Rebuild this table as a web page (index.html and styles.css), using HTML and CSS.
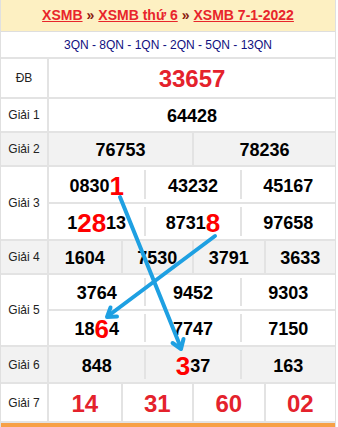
FILE: index.html
```html
<!DOCTYPE html>
<html lang="vi">
<head>
<meta charset="utf-8">
<title>XSMB 7-1-2022</title>
<link rel="stylesheet" href="styles.css">
</head>
<body>
<div class="board">
  <div class="title">
    <a href="#">XSMB</a> <span class="sep">»</span> <a href="#">XSMB thứ 6</a> <span class="sep">»</span> <a href="#">XSMB 7-1-2022</a>
  </div>
  <div class="codes">3QN - 8QN - 1QN - 2QN - 5QN - 13QN</div>

  <div class="row r-db">
    <div class="label">ĐB</div>
    <div class="data cols-1"><div class="cell special">33657</div></div>
  </div>

  <div class="row r-g1">
    <div class="label">Giải 1</div>
    <div class="data cols-1"><div class="cell">64428</div></div>
  </div>

  <div class="row r-g2 shade">
    <div class="label">Giải 2</div>
    <div class="data cols-2"><div class="cell">76753</div><div class="cell">78236</div></div>
  </div>

  <div class="row r-g3">
    <div class="label">Giải 3</div>
    <div class="data stack">
      <div class="sub">
        <div class="cell">0830<span class="hl">1</span></div>
        <div class="cell">43232</div>
        <div class="cell">45167</div>
      </div>
      <div class="sub">
        <div class="cell">1<span class="hl">28</span>13</div>
        <div class="cell">8731<span class="hl">8</span></div>
        <div class="cell">97658</div>
      </div>
    </div>
  </div>

  <div class="row r-g4 shade">
    <div class="label">Giải 4</div>
    <div class="data cols-4"><div class="cell">1604</div><div class="cell">7530</div><div class="cell">3791</div><div class="cell">3633</div></div>
  </div>

  <div class="row r-g5">
    <div class="label">Giải 5</div>
    <div class="data stack">
      <div class="sub">
        <div class="cell">3764</div>
        <div class="cell">9452</div>
        <div class="cell">9303</div>
      </div>
      <div class="sub">
        <div class="cell">18<span class="hl">6</span>4</div>
        <div class="cell">7747</div>
        <div class="cell">7150</div>
      </div>
    </div>
  </div>

  <div class="row r-g6 shade">
    <div class="label">Giải 6</div>
    <div class="data stack">
      <div class="sub">
        <div class="cell">848</div>
        <div class="cell"><span class="hl">3</span>37</div>
        <div class="cell">163</div>
      </div>
    </div>
  </div>

  <div class="row r-g7">
    <div class="label">Giải 7</div>
    <div class="data cols-4"><div class="cell red">14</div><div class="cell red">31</div><div class="cell red">60</div><div class="cell red">02</div></div>
  </div>

  <div class="bottom"></div>

  <svg class="arrows" width="336" height="427" viewBox="0 0 336 427" aria-hidden="true">
    <g fill="none" stroke="#1ea0e2" stroke-width="4" stroke-linecap="round" stroke-linejoin="round">
      <line x1="120" y1="197" x2="181" y2="348"/>
      <polyline points="172.6,343 181,349 183.5,339"/>
      <line x1="215" y1="236" x2="108" y2="316"/>
      <polyline points="117,316.5 107,317 110.5,307.5"/>
    </g>
  </svg>
</div>
</body>
</html>
```
FILE: styles.css
```css
* { box-sizing: border-box; }
html, body { margin: 0; padding: 0; background: #fff; }
body { font-family: "Liberation Sans", Arial, sans-serif; }

.board {
  position: relative;
  width: 336px;
  height: 427px;
  border-left: 1px solid #e0e0e0;
  border-right: 1px solid #e0e0e0;
  overflow: hidden;
}

.title {
  height: 32px;
  background: #fdf0c2;
  border-bottom: 1px solid #dedede;
  display: flex;
  align-items: center;
  justify-content: center;
  gap: 4px;
  font-size: 14px;
  font-weight: bold;
  padding-bottom: 1px;
}
.title a { color: #e8252b; text-decoration: underline; }
.title .sep { color: #8a1a10; }

.codes {
  height: 27px;
  border-bottom: 2px solid #e3e3e3;
  display: flex;
  align-items: center;
  justify-content: center;
  font-size: 12px;
  color: #101080;
}

.row {
  display: grid;
  grid-template-columns: 48px 1fr;
  border-bottom: 2px solid #e3e3e3;
}
.row.shade { background: #f2f2f2; }
.r-db { height: 40px; }
.r-g1 { height: 34px; }
.r-g2 { height: 34px; }
.r-g3 { height: 74px; }
.r-g4 { height: 34px; }
.r-g5 { height: 72px; }
.r-g6 { height: 37px; }
.r-g7 { height: 39px; }

.label {
  display: flex;
  align-items: center;
  justify-content: center;
  font-size: 12px;
  color: #222;
  border-right: 2px solid #e3e3e3;
}

.data { display: grid; }
.cols-1 { grid-template-columns: 1fr; }
.cols-2 { grid-template-columns: 1fr 1fr; }
.cols-4 { grid-template-columns: 1fr 1fr 1fr 1fr; }
.data > .cell + .cell { border-left: 2px solid #e3e3e3; }

.stack { display: flex; flex-direction: column; }
.sub {
  flex: 1;
  display: grid;
  grid-template-columns: 1fr 1fr 1fr;
  padding: 3px 0;
}
.sub + .sub { border-top: 2px solid #e3e3e3; }
.sub > .cell + .cell { border-left: 2px solid #e3e3e3; }

.cell {
  display: flex;
  align-items: center;
  justify-content: center;
  font-size: 18px;
  font-weight: bold;
  color: #000;
  line-height: 20px;
  padding-top: 2px;
}
.cell.special { font-size: 24px; color: #e4222c; padding-top: 1px; }
.cell.red { font-size: 24px; color: #e4222c; padding-top: 3px; }
.hl { color: #ff0000; font-size: 26px; line-height: 20px; }

.bottom { height: 4px; background: #f7a046; }

.arrows {
  position: absolute;
  left: -1px;
  top: 0;
  pointer-events: none;
}
```
